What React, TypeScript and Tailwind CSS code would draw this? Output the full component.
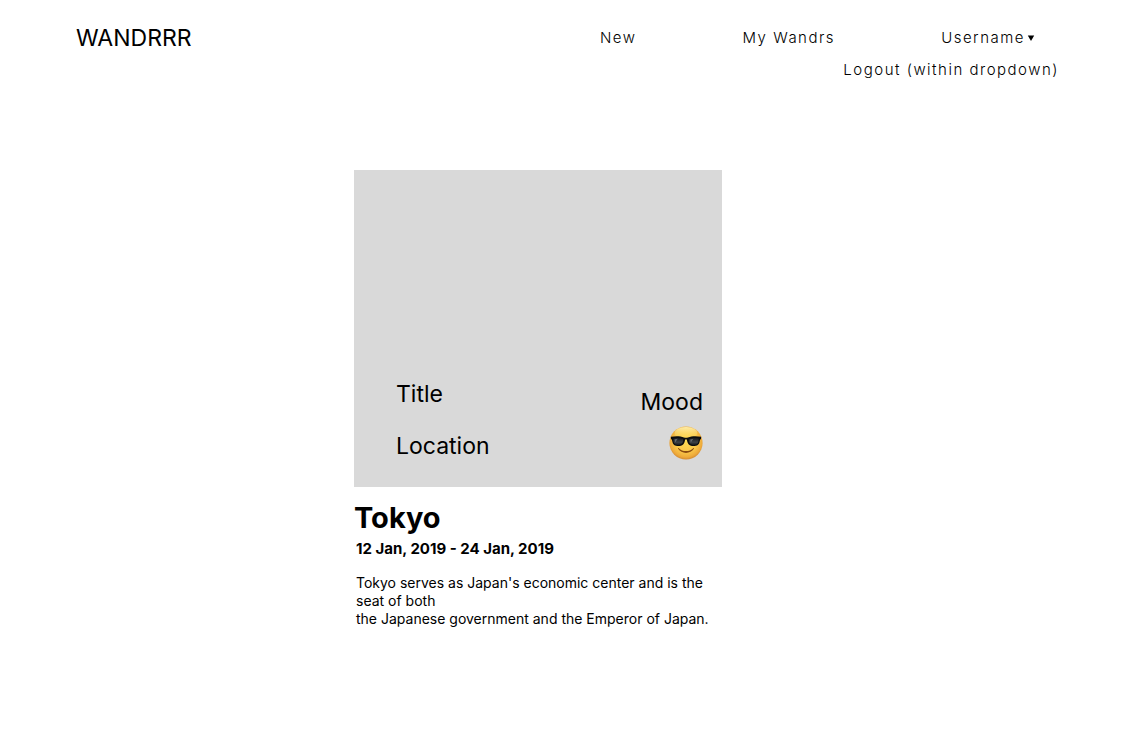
import { useState } from "react";

function SunglassesFace() {
  return (
    <svg viewBox="0 0 34 34" className="size-[34px]" role="img" aria-label="Cool">
      <defs>
        <radialGradient id="face" cx="0.5" cy="0.44" r="0.57">
          <stop offset="0" stopColor="#fddc55" />
          <stop offset="0.6" stopColor="#f9c548" />
          <stop offset="0.85" stopColor="#eeaa3a" />
          <stop offset="1" stopColor="#cf8530" />
        </radialGradient>
        <linearGradient id="shine" x1="0" y1="0" x2="0" y2="1">
          <stop offset="0" stopColor="#fff6c0" stopOpacity="0.85" />
          <stop offset="1" stopColor="#ffe566" stopOpacity="0" />
        </linearGradient>
        <linearGradient id="lens" x1="0" y1="0" x2="0" y2="1">
          <stop offset="0" stopColor="#15181c" />
          <stop offset="0.6" stopColor="#3d4146" />
          <stop offset="1" stopColor="#15181b" />
        </linearGradient>
      </defs>
      <circle cx="17" cy="17" r="16.6" fill="url(#face)" />
      <ellipse cx="17" cy="7" rx="11.5" ry="6" fill="url(#shine)" />
      <path d="M9.800 22.200c1.900 1.900 4.400 2.900 7.200 2.900s5.300-1 7.200-2.900c.5-.5 1.100 0 .7.600-1.700 2.600-4.600 4.100-7.900 4.100s-6.200-1.500-7.900-4.100c-.4-.6.2-1.100.7-.6z" fill="#8a4a10" />
      <path
        d="M1.800 10.800c4.600-1 9.500-.9 13.200.6 1.300.4 2.700.4 4 0 3.700-1.500 8.600-1.600 13.200-.6l-.2 2.200c-.8.4-1 1-1.200 2.100-.7 3.800-2.600 5-6.300 5-3.900 0-5.700-2-6.400-5.300-.2-1-.5-1.500-1.100-1.500s-.9.500-1.100 1.500c-.7 3.300-2.500 5.300-6.400 5.300-3.700 0-5.600-1.200-6.300-5-.2-1.100-.4-1.700-1.200-2.100z"
        fill="#0b0d0f"
      />
      <path d="M4.300 12.500c3.300-.8 6.800-.6 9.800.5.500 2.900-1.300 6.100-4.900 6.100-3.600 0-4.900-2.100-4.900-6.600z" fill="url(#lens)" />
      <path d="M29.700 12.500c-3.300-.8-6.800-.6-9.800.5-.5 2.900 1.300 6.100 4.900 6.100 3.600 0 4.900-2.100 4.900-6.600z" fill="url(#lens)" />
      <path d="M5.500 13.200l3.200-.4-2.500 3.400zM21.200 13.500l3.200-.7-2.600 3.600z" fill="#8b9197" opacity="0.6" />
    </svg>
  );
}

function Header() {
  const [open, setOpen] = useState(true);
  return (
    <header className="flex items-start justify-between pt-6 pr-[105px] pl-[76px]">
      <a href="#home" className="text-[23px] leading-7">
        WANDRRR
      </a>
      <nav className="flex gap-[106px] pt-1 text-[15px] leading-5 font-light tracking-widest">
        <a href="#new">New</a>
        <a href="#wandrs">My Wandrs</a>
        <div className="relative">
          <button
            type="button"
            aria-expanded={open}
            onClick={() => setOpen(!open)}
            className="flex items-center gap-0.5 tracking-widest"
          >
            Username
            <svg viewBox="0 0 8 8" className="size-2" aria-hidden="true">
              <path d="M.8 1.500h6.400L4 7z" fill="#000" />
            </svg>
          </button>
          {open && (
            <div className="absolute top-8 -right-6 whitespace-nowrap">
              <button type="button" className="tracking-widest">
                Logout (within dropdown)
              </button>
            </div>
          )}
        </div>
      </nav>
    </header>
  );
}

export default function App() {
  return (
    <div className="min-h-screen bg-white font-['Inter',sans-serif] text-black">
      <Header />
      <main className="pt-[118px] pr-16 pb-12">
        <article className="mx-auto max-w-[368px]">
          <div className="flex items-start justify-between bg-[#d9d9d9] pt-[208px] pr-[19px] pb-[25px] pl-[42px] text-[23px] leading-8">
            <div className="flex flex-col gap-5">
              <p>Title</p>
              <p>Location</p>
            </div>
            <div className="flex flex-col items-end gap-2 pt-2">
              <p>Mood</p>
              <SunglassesFace />
            </div>
          </div>
          <h1 className="pt-[13px] text-[29px] leading-9 font-bold">Tokyo</h1>
          <div className="pl-0.5 leading-[18px]">
            <p className="pt-1 text-[15px] font-bold">12 Jan, 2019 - 24 Jan, 2019</p>
            <p className="pt-4 text-sm leading-[18px]">
              Tokyo serves as Japan's economic center and is the seat of both
              <br />
              the Japanese government and the Emperor of Japan.
            </p>
          </div>
        </article>
      </main>
    </div>
  );
}
